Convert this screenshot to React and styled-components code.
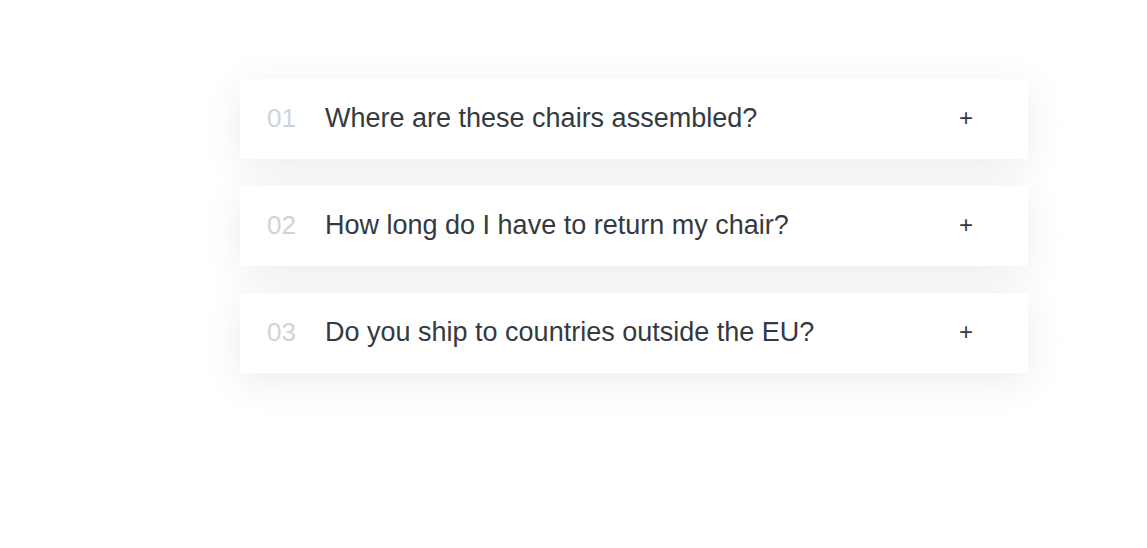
import styled, { createGlobalStyle } from 'styled-components'

const GlobalStyle = createGlobalStyle`
    html, body {
        margin: 0;
        padding: 0;
        background: #ffffff;
    }
    body {
        font-family: "Liberation Sans", Arial, sans-serif;
    }
`

const Page = styled.main`
    display: flex;
    justify-content: flex-start;
    padding: 79px 0 0 240px;
    min-height: 548px;
    box-sizing: border-box;
`

const Accordion = styled.div`
    width: 788px;
    display: flex;
    flex-direction: column;
    gap: 27px;
`

const Item = styled.div`
    height: 80px;
    box-sizing: border-box;
    background: #ffffff;
    box-shadow: 0 8px 40px rgba(0, 0, 0, 0.08);
    display: flex;
    align-items: center;
    padding: 0 55px 2px 27px;
    font-size: 26px;
    line-height: 1;
`

const Number = styled.span`
    color: #ced4da;
    width: 29px;
    margin-right: 29px;
`

const Question = styled.span`
    flex-grow: 1;
    color: #343a40;
    font-size: 27px;
`

const Plus = styled.span`
    color: #343a40;
    font-size: 24px;
`

const faqs = [
    'Where are these chairs assembled?',
    'How long do I have to return my chair?',
    'Do you ship to countries outside the EU?',
]

const App = () => {
    return (
        <>
            <GlobalStyle />
            <Page>
                <Accordion>
                    {faqs.map((q, i) => (
                        <Item key={q}>
                            <Number>{String(i + 1).padStart(2, '0')}</Number>
                            <Question>{q}</Question>
                            <Plus>+</Plus>
                        </Item>
                    ))}
                </Accordion>
            </Page>
        </>
    )
}

export default App
